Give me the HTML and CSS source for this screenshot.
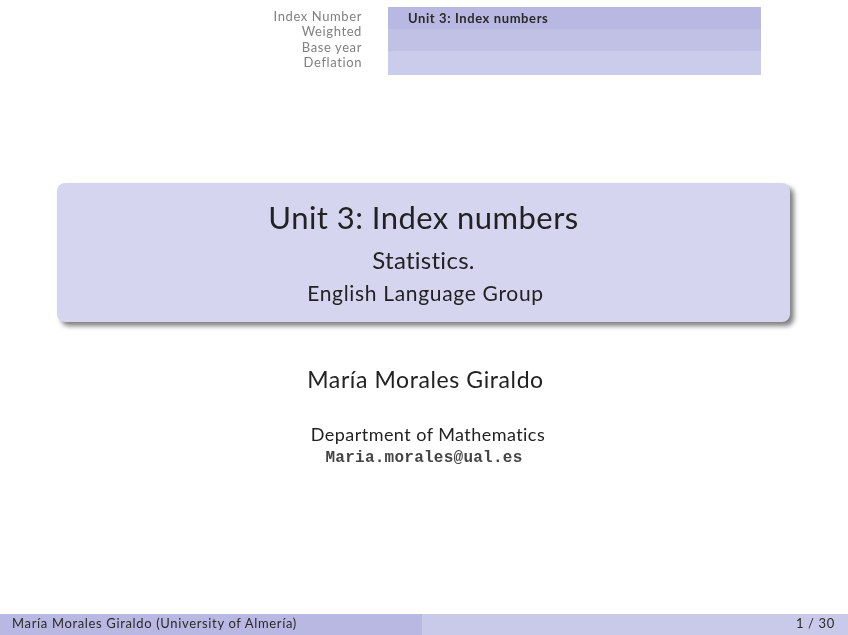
FILE: index.html
```html
<!DOCTYPE html>
<html lang="en">
<head>
<meta charset="utf-8">
<title>Unit 3: Index numbers</title>
<link rel="stylesheet" href="styles.css">
</head>
<body>
<div class="slide">
  <header class="top">
    <nav class="sections">
      <div>Index Number</div>
      <div>Weighted</div>
      <div>Base year</div>
      <div>Deflation</div>
    </nav>
    <div class="bar">
      <div class="bar-row bar-a"><span class="bar-text">Unit 3: Index numbers</span></div>
      <div class="bar-row bar-b"></div>
      <div class="bar-row bar-c"></div>
    </div>
  </header>
  <main class="main">
    <section class="title-box">
      <h1 class="title">Unit 3: Index numbers</h1>
      <p class="subtitle">Statistics.</p>
      <p class="group">English Language Group</p>
    </section>
    <p class="author">María Morales Giraldo</p>
    <p class="dept">Department of Mathematics</p>
    <p class="mail">Maria.morales@ual.es</p>
  </main>
  <footer class="foot">
    <div class="foot-left"><span class="foot-text">María Morales Giraldo (University of Almería)</span></div>
    <div class="foot-right"><span class="foot-text">1 / 30</span></div>
  </footer>
</div>
</body>
</html>
```
FILE: styles.css
```css
* { box-sizing: border-box; }
html, body { margin: 0; padding: 0; background: #fff; }
body { font-family: "Lato", "Open Sans", sans-serif; font-variant-ligatures: none; color: #222; overflow: hidden; }
.slide { width: 848px; height: 635px; display: flex; flex-direction: column; }
.top { height: 75px; display: flex; padding-top: 7px; }
.sections { width: 362px; padding-top: 1.5px; text-align: right; font-size: 13px; line-height: 15.5px; letter-spacing: .6px; color: #808080; filter: blur(.7px); }
.bar { width: 373px; margin-left: 26px; display: flex; flex-direction: column; }
.bar-row { height: 22px; }
.bar-a { background: #b8b8e2; padding: 1px 0 0 20px; font-size: 13px; line-height: 21px; color: #2a2a2a; font-weight: 700; }
.bar-text { display: block; letter-spacing: .6px; filter: blur(.7px); }
.bar-b { background: #c1c1e6; }
.bar-c { background: #cbcbeb; height: 24px; }
.main { flex: 1; display: flex; flex-direction: column; align-items: center; padding-top: 108px; }
.title-box { width: 733px; height: 139px; margin-left: -1px; background: #d5d5f0; border-radius: 8px; box-shadow: 4px 4px 5px #808080; text-align: center; padding-top: 16px; }
.title, .subtitle, .group, .author, .dept, .mail { margin: 0; font-weight: 400; filter: blur(.6px); }
.title { font-size: 31px; line-height: 37px; letter-spacing: .45px; }
.subtitle { font-size: 24px; line-height: 30px; margin-top: 9px; letter-spacing: .27px; }
.group { font-size: 21px; line-height: 28px; margin-top: 4px; padding-left: 4px; letter-spacing: .68px; }
.author { font-size: 23px; line-height: 30px; margin-top: 42px; margin-left: 3px; letter-spacing: .6px; }
.dept { font-size: 18px; line-height: 24px; margin-top: 28px; margin-left: 8px; letter-spacing: .45px; }
.mail { font-family: "Liberation Mono", monospace; font-size: 16px; font-weight: 700; line-height: 20px; margin-top: 2px; letter-spacing: .25px; color: #444; }
.foot { height: 21px; display: flex; font-size: 13px; line-height: 19px; color: #2a2a2a; }
.foot-left { width: 422px; background: #b8b8e2; padding-left: 12px; }
.foot-right { flex: 1; background: #c9c9ea; text-align: right; padding-right: 13px; }
.foot-text { display: block; letter-spacing: .65px; filter: blur(.7px); }
```
